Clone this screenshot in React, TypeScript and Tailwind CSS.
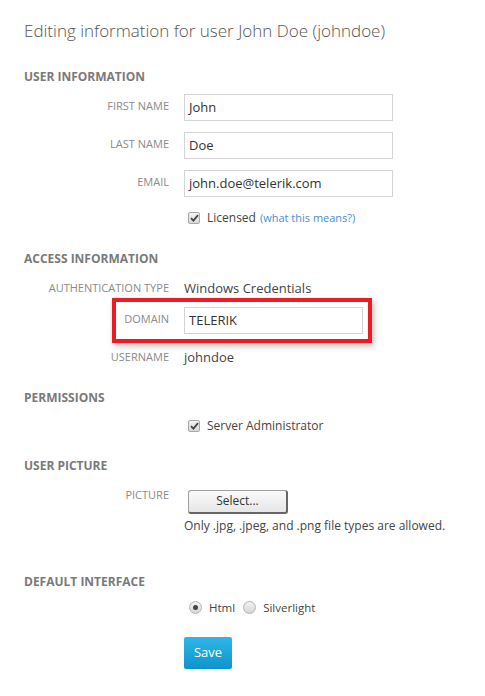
import React from "react";

function Label({ children, w = "w-[145px]", pt = "pt-[4px]" }: { children: React.ReactNode; w?: string; pt?: string }) {
  return (
    <div className={`${w} ${pt} shrink-0 text-right text-[11px] leading-4 uppercase text-[#8a8a8a]`}>{children}</div>
  );
}

function Heading({ children, mt }: { children: React.ReactNode; mt: string }) {
  return <div className={`${mt} text-[12px] leading-4 font-bold uppercase text-[#7a7a7a]`}>{children}</div>;
}

function TextInput({ value, w = "w-[209px]" }: { value: string; w?: string }) {
  return (
    <div className={`ml-[15px] ${w} h-[27px] border border-[#d4d4d4] bg-white px-[4px] flex items-center text-[13px] text-[#333]`}>
      {value}
    </div>
  );
}

function Checkbox() {
  return (
    <div className="w-[12px] h-[12px] rounded-[2px] border border-[#a8a8a8] bg-gradient-to-b from-[#f4f4f4] to-[#d9d9d9] flex items-center justify-center">
      <svg width="9" height="8" viewBox="0 0 9 8">
        <path d="M1 4.2 L3.4 6.6 L8 1.2" stroke="#444" strokeWidth="1.8" fill="none" />
      </svg>
    </div>
  );
}

function Radio({ checked }: { checked?: boolean }) {
  return (
    <div className="w-[13px] h-[13px] rounded-full border border-[#b5b5b5] bg-gradient-to-b from-[#f2f2f2] to-[#d6d6d6] flex items-center justify-center">
      {checked && <div className="w-[5px] h-[5px] rounded-full bg-[#444]" />}
    </div>
  );
}

export default function App() {
  return (
    <div className="w-[485px] h-[696px] bg-white pl-6 pt-[19px] font-['Open_Sans',sans-serif] text-[#333]">
      <h1 className="text-[17px] leading-6 font-light text-[#555]">Editing information for user John Doe (johndoe)</h1>

      <Heading mt="mt-[26px]">User Information</Heading>
      <div className="mt-[9px] flex">
        <Label>First Name</Label>
        <TextInput value="John" />
      </div>
      <div className="mt-[11px] flex">
        <Label>Last Name</Label>
        <TextInput value="Doe" />
      </div>
      <div className="mt-[11px] flex">
        <Label>Email</Label>
        <TextInput value="john.doe@telerik.com" />
      </div>
      <div className="mt-[12px] flex items-center">
        <div className="w-[145px] shrink-0" />
        <div className="ml-[19px] flex items-center text-[12px] leading-[18px]">
          <Checkbox />
          <span className="ml-[7px] text-[#444]">Licensed</span>
          <span className="ml-[4px] text-[11px] text-[#4a8dd3]">(what this means?)</span>
        </div>
      </div>

      <Heading mt="mt-[24px]">Access Information</Heading>
      <div className="mt-[12px] flex">
        <Label pt="pt-[1px]">Authentication Type</Label>
        <div className="ml-[15px] text-[13px] leading-[18px] text-[#444]">Windows Credentials</div>
      </div>
      <div className="mt-[1px] ml-[88px] w-[260px] h-[45px] border-[4px] border-[#ec1c24] shadow-[2px_3px_6px_rgba(0,0,0,0.25)] flex pt-[5px]">
        <Label w="w-[53px]">Domain</Label>
        <TextInput value="TELERIK" w="w-[179px]" />
      </div>
      <div className="mt-[5px] flex">
        <Label pt="pt-[1px]">Username</Label>
        <div className="ml-[15px] text-[13px] leading-[18px] text-[#444]">johndoe</div>
      </div>

      <Heading mt="mt-[24px]">Permissions</Heading>
      <div className="mt-[11px] flex items-center">
        <div className="w-[145px] shrink-0" />
        <div className="ml-[19px] flex items-center text-[12px] leading-[18px]">
          <Checkbox />
          <span className="ml-[7px] text-[#444]">Server Administrator</span>
        </div>
      </div>

      <Heading mt="mt-[23px]">User Picture</Heading>
      <div className="mt-[13px] flex">
        <Label pt="pt-0">Picture</Label>
        <div className="ml-[15px]">
          <button className="ml-[4px] w-[100px] h-[24px] rounded-[3px] border border-[#a0a0a0] border-r-[#666] border-b-[#666] border-r-2 border-b-2 bg-gradient-to-b from-[#fafafa] to-[#e6e6e6] text-[12px] text-[#333] leading-none">
            Select...
          </button>
          <div className="mt-[3px] text-[12px] leading-[18px] text-[#444]">Only .jpg, .jpeg, and .png file types are allowed.</div>
        </div>
      </div>

      <Heading mt="mt-[39px]">Default Interface</Heading>
      <div className="mt-[9px] flex items-center">
        <div className="w-[145px] shrink-0" />
        <div className="ml-[20px] flex items-center text-[11.5px] leading-[18px] text-[#444]">
          <Radio checked />
          <span className="ml-[7px]">Html</span>
          <span className="ml-[8px]"><Radio /></span>
          <span className="ml-[7px]">Silverlight</span>
        </div>
      </div>

      <div className="mt-[20px] ml-[160px]">
        <button className="w-[48px] h-[32px] rounded-[2px] bg-gradient-to-b from-[#2fb6e8] to-[#0b94cb] text-white text-[13px] leading-none">
          Save
        </button>
      </div>
    </div>
  );
}
